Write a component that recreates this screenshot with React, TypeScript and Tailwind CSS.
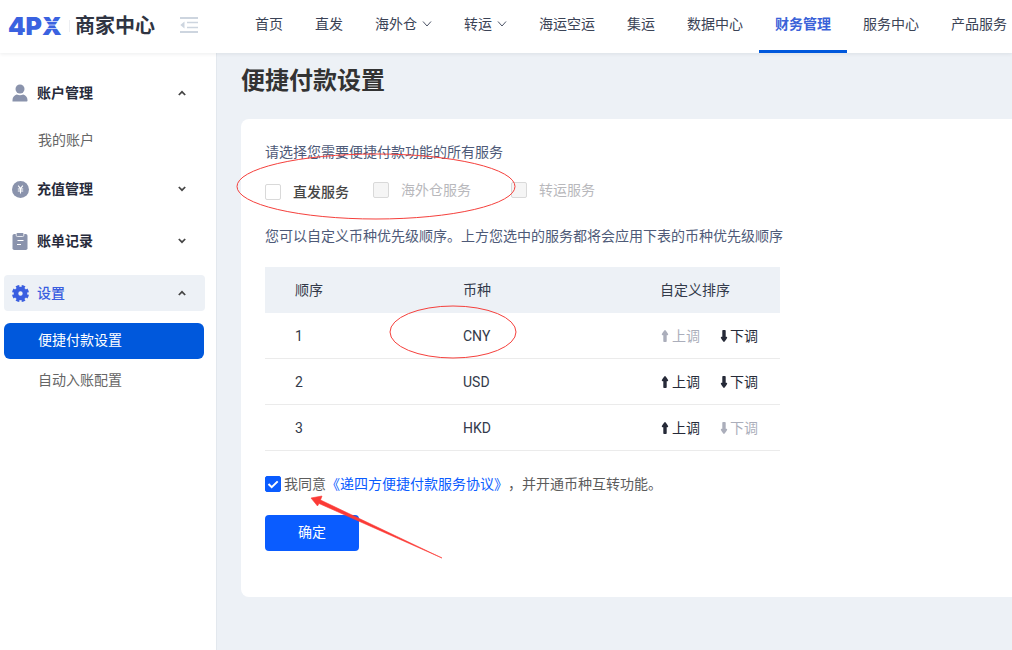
import { useState } from "react";
import type { ReactNode } from "react";
import clsx from "clsx";

const navItems = [
  { label: "首页" },
  { label: "直发" },
  { label: "海外仓", dropdown: true },
  { label: "转运", dropdown: true },
  { label: "海运空运" },
  { label: "集运" },
  { label: "数据中心" },
  { label: "财务管理", active: true },
  { label: "服务中心" },
  { label: "产品服务" },
];

const UserIcon = () => (
  <svg viewBox="0 0 16 18" className="h-[18px] w-4" fill="currentColor">
    <circle cx="8" cy="5" r="4.5" />
    <path d="M.5 17.500v-1.500c0-3 1.900-5 4.300-5.600 2 1 4.400 1 6.400 0 2.400.6 4.300 2.600 4.300 5.600v.5c0 .6-.4 1-1 1z" />
  </svg>
);

const CoinIcon = () => (
  <svg viewBox="0 0 17 17" className="h-[17px] w-[17px]">
    <circle cx="8.5" cy="8.5" r="8.5" fill="currentColor" />
    <path
      d="M6.2 4.6l2.3 3 2.3-3M5.8 8h5.4M5.8 10h5.4M8.5 7.6v5"
      stroke="#fff"
      strokeWidth="1.1"
      fill="none"
    />
  </svg>
);

const BillIcon = () => (
  <svg viewBox="0 0 16 17" className="h-[17px] w-4">
    <rect x=".5" y="1" width="15" height="16" rx="1.8" fill="currentColor" />
    <rect x="4.200" y="-.5" width="7.600" height="4" rx="1.200" fill="currentColor" stroke="#fff" strokeWidth=".8" />
    <path d="M5.500 7.500h6M5 11.500h4" stroke="#fff" strokeWidth="1.100" />
  </svg>
);

const GearIcon = () => (
  <svg viewBox="0 0 17 17" className="h-[17px] w-[17px]" fill="none" stroke="currentColor">
    <circle cx="8.5" cy="8.5" r="4.500" strokeWidth="4.600" />
    <circle
      cx="8.5"
      cy="8.5"
      r="7"
      strokeWidth="3"
      pathLength="80"
      strokeDasharray="6 4"
      strokeDashoffset="-2"
    />
  </svg>
);

const CollapseIcon = () => (
  <svg viewBox="0 0 18 16" className="h-4 w-[18px]">
    <path d="M0 1h18M0 15h18" stroke="#cdd5df" strokeWidth="2" />
    <path d="M7 5.500h11M7 10.500h11" stroke="#cdd5df" strokeWidth="1.400" />
    <path d="M4.5 4.5v7L.3 8z" fill="#cdd5df" />
  </svg>
);

const Chevron = ({ up }: { up?: boolean }) => (
  <svg viewBox="0 0 8 6" className={clsx("h-1.5 w-2 text-[#454545]", up && "rotate-180")}>
    <path d="M.8 1L4 4.2 7.2 1" fill="none" stroke="currentColor" strokeWidth="1.7" />
  </svg>
);

const MoveIcon = ({ down }: { down?: boolean }) => (
  <svg viewBox="0 0 8 12" className={clsx("h-3 w-2", down && "rotate-180")} fill="currentColor">
    <path d="M4 0c.6 0 3.200 3.800 3.200 4.500 0 .5-.3.700-.8.700h-.7V11c0 .6-.4 1-1 1H3.300c-.6 0-1-.4-1-1V5.200h-.7c-.5 0-.8-.2-.8-.7C.8 3.800 3.400 0 4 0z" />
  </svg>
);

interface MenuGroupProps {
  icon: ReactNode;
  label: string;
  active?: boolean;
  open?: boolean;
  children?: ReactNode;
}

const MenuGroup = ({ icon, label, active, open, children }: MenuGroupProps) => (
  <li>
    <button
      type="button"
      aria-expanded={!!open}
      className={clsx(
        "flex h-9 w-full items-center rounded pl-2 pr-[19px]",
        active ? "bg-[#edf1f6] text-[#3a5ee0]" : "text-[#8a93ac]"
      )}
    >
      <span className="flex w-[25px]">{icon}</span>
      <span className={clsx("flex-1 text-left", active ? "font-medium" : "font-bold text-[#272b3b]")}>
        {label}
      </span>
      <Chevron up={open} />
    </button>
    {children && <ul className="mt-3 flex flex-col gap-1">{children}</ul>}
  </li>
);

const SubItem = ({ label, active }: { label: string; active?: boolean }) => (
  <li>
    <a
      href="#"
      className={clsx(
        "mr-px flex items-center pl-[34px]",
        active ? "h-9 rounded-md bg-[#0058dc] pb-0.5 text-white" : "h-8 pt-px text-[#666]"
      )}
    >
      {label}
    </a>
  </li>
);

const services = [
  { id: "direct", label: "直发服务", disabled: false },
  { id: "overseas", label: "海外仓服务", disabled: true },
  { id: "transfer", label: "转运服务", disabled: true },
];

const currencies = ["CNY", "USD", "HKD"];

const App = () => {
  const [agreed, setAgreed] = useState(true);

  return (
    <div className="flex min-h-screen flex-col overflow-hidden bg-[#edf1f6] font-[Roboto,'Noto_Sans_CJK_SC',sans-serif] text-sm">
      <header className="relative z-10 flex h-[53px] items-center bg-white whitespace-nowrap shadow-[0_1px_4px_rgba(0,21,41,0.08)]">
        <a href="#" className="flex w-[180px] shrink-0 items-center pb-0.5 pl-2">
          <span className="relative w-[58px] font-[Inter,sans-serif] text-[25px] leading-8 font-black text-[#3a62e0]">
            4PX
            <svg viewBox="0 0 20 20" className="absolute top-1.5 right-0 h-5 w-5">
              <path d="M0 5.5h20M0 9h20M0 12.5h20" stroke="#fff" strokeWidth=".7" />
            </svg>
          </span>
          <span className="ml-[3px] h-3 w-px bg-[#eceef2]" />
          <span className="ml-[5px] text-xl font-bold text-[#2f3442]">商家中心</span>
        </a>
        <button type="button" aria-label="收起菜单" className="shrink-0 pb-1">
          <CollapseIcon />
        </button>
        <nav className="ml-[41px] flex h-full shrink-0">
          {navItems.map((item) => (
            <a
              key={item.label}
              href="#"
              className={clsx(
                "flex items-center border-b-3 px-4 pb-0.5",
                item.active
                  ? "border-[#0058dc] font-bold text-[#3a62d8]"
                  : "border-transparent text-[#3b4356]"
              )}
            >
              {item.label}
              {item.dropdown && (
                <svg viewBox="0 0 10 6" className="ml-[5px] h-1.5 w-2.5">
                  <path d="M1 .5l4 4.5 4-4.5" fill="none" stroke="#4b5366" />
                </svg>
              )}
            </a>
          ))}
        </nav>
      </header>

      <div className="flex flex-1">
        <aside className="w-[217px] shrink-0 border-r border-[#e3e8ee] bg-white pt-[22px] pr-[11px] pl-1">
          <ul className="flex flex-col gap-4">
            <MenuGroup icon={<UserIcon />} label="账户管理" open>
              <SubItem label="我的账户" />
            </MenuGroup>
            <MenuGroup icon={<CoinIcon />} label="充值管理" />
            <MenuGroup icon={<BillIcon />} label="账单记录" />
            <MenuGroup icon={<GearIcon />} label="设置" active open>
              <SubItem label="便捷付款设置" active />
              <SubItem label="自动入账配置" />
            </MenuGroup>
          </ul>
        </aside>

        <main className="min-w-0 flex-1 pt-3 pl-6">
          <h1 className="mb-[22px] text-2xl font-bold text-[#333]">便捷付款设置</h1>

          <section className="relative rounded-l-lg bg-white px-6 pt-[23px] pb-[46px]">
            <p className="text-[#4e5a78]">请选择您需要便捷付款功能的所有服务</p>

            <div className="mt-5 flex items-start">
              {services.map(({ id, label, disabled }) => (
                <label
                  key={id}
                  htmlFor={id}
                  className={clsx(
                    "flex items-center gap-3 leading-4",
                    disabled ? "mr-10 text-[#b8b8bc]" : "mt-0.5 mr-6 font-medium text-[#454545]"
                  )}
                >
                  <input
                    id={id}
                    type="checkbox"
                    disabled={disabled}
                    className="h-4 w-4 appearance-none rounded-xs border border-[#d9d9d9] bg-white checked:bg-[#0a5cff] disabled:bg-[#f5f5f5]"
                  />
                  {label}
                </label>
              ))}
            </div>

            <p className="mt-[26px] text-[#4e5a78]">
              您可以自定义币种优先级顺序。上方您选中的服务都将会应用下表的币种优先级顺序
            </p>

            <table className="mt-[21px] w-full max-w-[515px] table-fixed border-separate border-spacing-0 text-left text-[#333a4a]">
              <thead>
                <tr className="h-[46px] bg-[#edf1f6]">
                  <th className="w-[168px] pl-[30px] font-normal">顺序</th>
                  <th className="w-[197px] pl-[30px] font-normal">币种</th>
                  <th className="pl-[30px] font-normal">自定义排序</th>
                </tr>
              </thead>
              <tbody>
                {currencies.map((currency, i) => (
                  <tr key={currency} className="h-[46px]">
                    <td className="border-b border-[#ebebeb] pl-[30px]">{i + 1}</td>
                    <td className="border-b border-[#ebebeb] pl-[30px]">{currency}</td>
                    <td className="border-b border-[#ebebeb] pl-[31px]">
                      <div className="flex gap-5 text-[#262a38]">
                        <button
                          type="button"
                          disabled={i === 0}
                          className="flex items-center gap-[3px] disabled:text-[#abaebb]"
                        >
                          <MoveIcon />
                          上调
                        </button>
                        <button
                          type="button"
                          disabled={i === currencies.length - 1}
                          className="flex items-center gap-0.5 disabled:text-[#abaebb]"
                        >
                          <MoveIcon down />
                          下调
                        </button>
                      </div>
                    </td>
                  </tr>
                ))}
              </tbody>
            </table>

            <div className="mt-[23px] flex items-center text-[#5c5c5c]">
              <span className="relative mr-[3px] flex">
                <input
                  id="agree"
                  type="checkbox"
                  checked={agreed}
                  onChange={(e) => setAgreed(e.target.checked)}
                  className="h-4 w-4 appearance-none rounded-xs border border-[#d9d9d9] checked:border-[#0a5cff] checked:bg-[#0a5cff]"
                />
                {agreed && (
                  <svg viewBox="0 0 16 16" className="pointer-events-none absolute inset-0">
                    <path d="M3.5 8l3.2 3.2 6-5.8" fill="none" stroke="#fff" strokeWidth="2" />
                  </svg>
                )}
              </span>
              <label htmlFor="agree">我同意</label>
              <a href="#" className="text-[#0a5cff]">《递四方便捷付款服务协议》</a>
              <span>，并开通币种互转功能。</span>
            </div>

            <button
              type="button"
              className="mt-[21px] flex h-9 w-[94px] items-center justify-center rounded bg-[#0a5cff] pb-0.5 text-white"
            >
              确定
            </button>

            {/* hand-drawn marks over the form */}
            <svg
              width="280"
              height="450"
              className="pointer-events-none absolute top-0 left-0 overflow-visible"
              fill="none"
              stroke="#f5403c"
            >
              <ellipse cx="135" cy="67.5" rx="139" ry="32.5" />
              <ellipse cx="212" cy="213" rx="63" ry="26" />
              <path
                d="M70 379L81 377L79.5 381L201 439L78 384.5L76.500 387z"
                fill="#fb3a36"
                stroke="#fb3a36"
                strokeWidth=".6"
              />
            </svg>
          </section>
        </main>
      </div>
    </div>
  );
};

export default App;
